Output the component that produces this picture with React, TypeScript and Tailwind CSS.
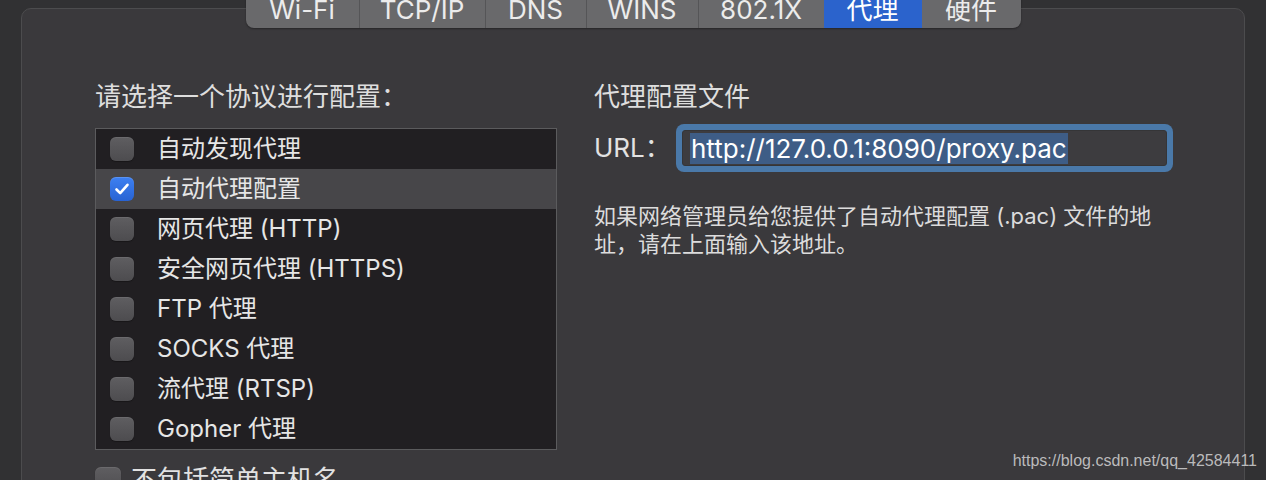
import React from "react";

const tabs = [
  { label: "Wi-Fi", w: "w-[113px]", sep: false },
  { label: "TCP/IP", w: "w-[126px]", sep: true },
  { label: "DNS", w: "w-[101px]", sep: true },
  { label: "WINS", w: "w-[112px]", sep: true },
  { label: "802.1X", w: "w-[126px]", sep: true },
  { label: "代理", w: "w-[98px]", sep: false, active: true },
  { label: "硬件", w: "w-[99px]", sep: false },
];

const items = [
  { label: "自动发现代理" },
  { label: "自动代理配置", checked: true },
  { label: "网页代理 (HTTP)" },
  { label: "安全网页代理 (HTTPS)" },
  { label: "FTP 代理" },
  { label: "SOCKS 代理" },
  { label: "流代理 (RTSP)" },
  { label: "Gopher 代理" },
];

function Box({ checked, big }: { checked?: boolean; big?: boolean }) {
  const size = big ? "w-[26px] h-[26px] rounded-[6px]" : "w-[24px] h-[24px] rounded-[6px]";
  if (checked) {
    return (
      <div
        className={`${size} shrink-0 flex items-center justify-center bg-linear-to-b from-[#3d80f2] to-[#2863d3] shadow-[inset_0_1px_0_rgba(255,255,255,0.15)]`}
      >
        <svg width="18" height="18" viewBox="0 0 18 18">
          <polyline
            points="3.5,9.5 7.2,13.2 14.5,4.8"
            fill="none"
            stroke="white"
            strokeWidth="2.6"
            strokeLinecap="round"
            strokeLinejoin="round"
          />
        </svg>
      </div>
    );
  }
  return (
    <div
      className={`${size} shrink-0 bg-linear-to-b from-[#5f5e61] to-[#4d4c4f] shadow-[inset_0_1px_0_rgba(255,255,255,0.08),0_1px_1px_rgba(0,0,0,0.3)]`}
    />
  );
}

export default function App() {
  return (
    <div className="relative w-[1266px] h-[480px] overflow-hidden bg-[#313133] font-[family-name:Inter,'Noto_Sans_CJK_SC',sans-serif] text-[#e4e4e4]">
      {/* tab bar */}
      <div className="relative z-10 mx-auto -mt-[16px] flex h-[44px] w-[775px] overflow-hidden rounded-b-[8px] bg-[#69696b] shadow-[0_1px_2px_rgba(0,0,0,0.35)]">
        {tabs.map((t) => (
          <div
            key={t.label}
            className={`${t.w} flex items-end justify-center pb-[3px] text-[26px] leading-[30px] ${
              t.active ? "bg-[#2b63cc] text-white" : "text-[#ececec]"
            } ${t.sep ? "border-l border-[#555557]" : ""}`}
          >
            {t.label}
          </div>
        ))}
      </div>

      {/* panel */}
      <div className="mx-[21px] -mt-[20px] h-[600px] rounded-[10px] border border-[#4c4c4e] bg-[#3a393c] pl-[73px] pt-[73px]">
        <div className="flex">
          {/* left column */}
          <div className="w-[462px] flex flex-col">
            <div className="text-[26px] leading-[30px] text-[#dedede]">请选择一个协议进行配置：</div>
            <div className="mt-[16px] border border-[#5b5b5d] bg-[#211f22]">
              {items.map((it) => (
                <div
                  key={it.label}
                  className={`flex h-[40px] items-center pl-[14px] ${it.checked ? "bg-[#474649]" : ""}`}
                >
                  <Box checked={it.checked} />
                  <span className="ml-[23px] text-[24px] leading-[30px] text-[#e6e6e6]">{it.label}</span>
                </div>
              ))}
            </div>
            <div className="mt-[15px] flex items-center">
              <Box big />
              <span className="ml-[10px] text-[26px] leading-[30px] text-[#e2e2e2]">不包括简单主机名</span>
            </div>
          </div>

          {/* right column */}
          <div className="ml-[37px] flex flex-col">
            <div className="text-[26px] leading-[30px] text-[#dedede]">代理配置文件</div>
            <div className="mt-[12px] flex items-center">
              <span className="w-[82px] text-[26px] leading-[30px] text-[#e2e2e2]">URL：</span>
              <div className="h-[48px] w-[497px] rounded-[8px] bg-[#4a79a9] p-[6px]">
                <div className="flex h-full items-center rounded-[3px] border border-[#353537] bg-[#3d3c3f] pl-[7px]">
                  <span className="bg-[#3e5d86] px-[1px] text-[26px] leading-[31px] text-white">
                    http://127.0.0.1:8090/proxy.pac
                  </span>
                </div>
              </div>
            </div>
            <div className="mt-[30px] w-[580px] text-[22px] leading-[28px] text-[#dcdcdc]">
              <div>如果网络管理员给您提供了自动代理配置 (.pac) 文件的地</div>
              <div>址，请在上面输入该地址。</div>
            </div>
          </div>
        </div>
      </div>

      {/* watermark */}
      <div className="absolute right-[9px] top-[450px] font-[family-name:'Liberation_Sans',sans-serif] text-[16px] leading-[22px] text-[#d4d4d4]/85">
        https://blog.csdn.net/qq_42584411
      </div>
    </div>
  );
}
